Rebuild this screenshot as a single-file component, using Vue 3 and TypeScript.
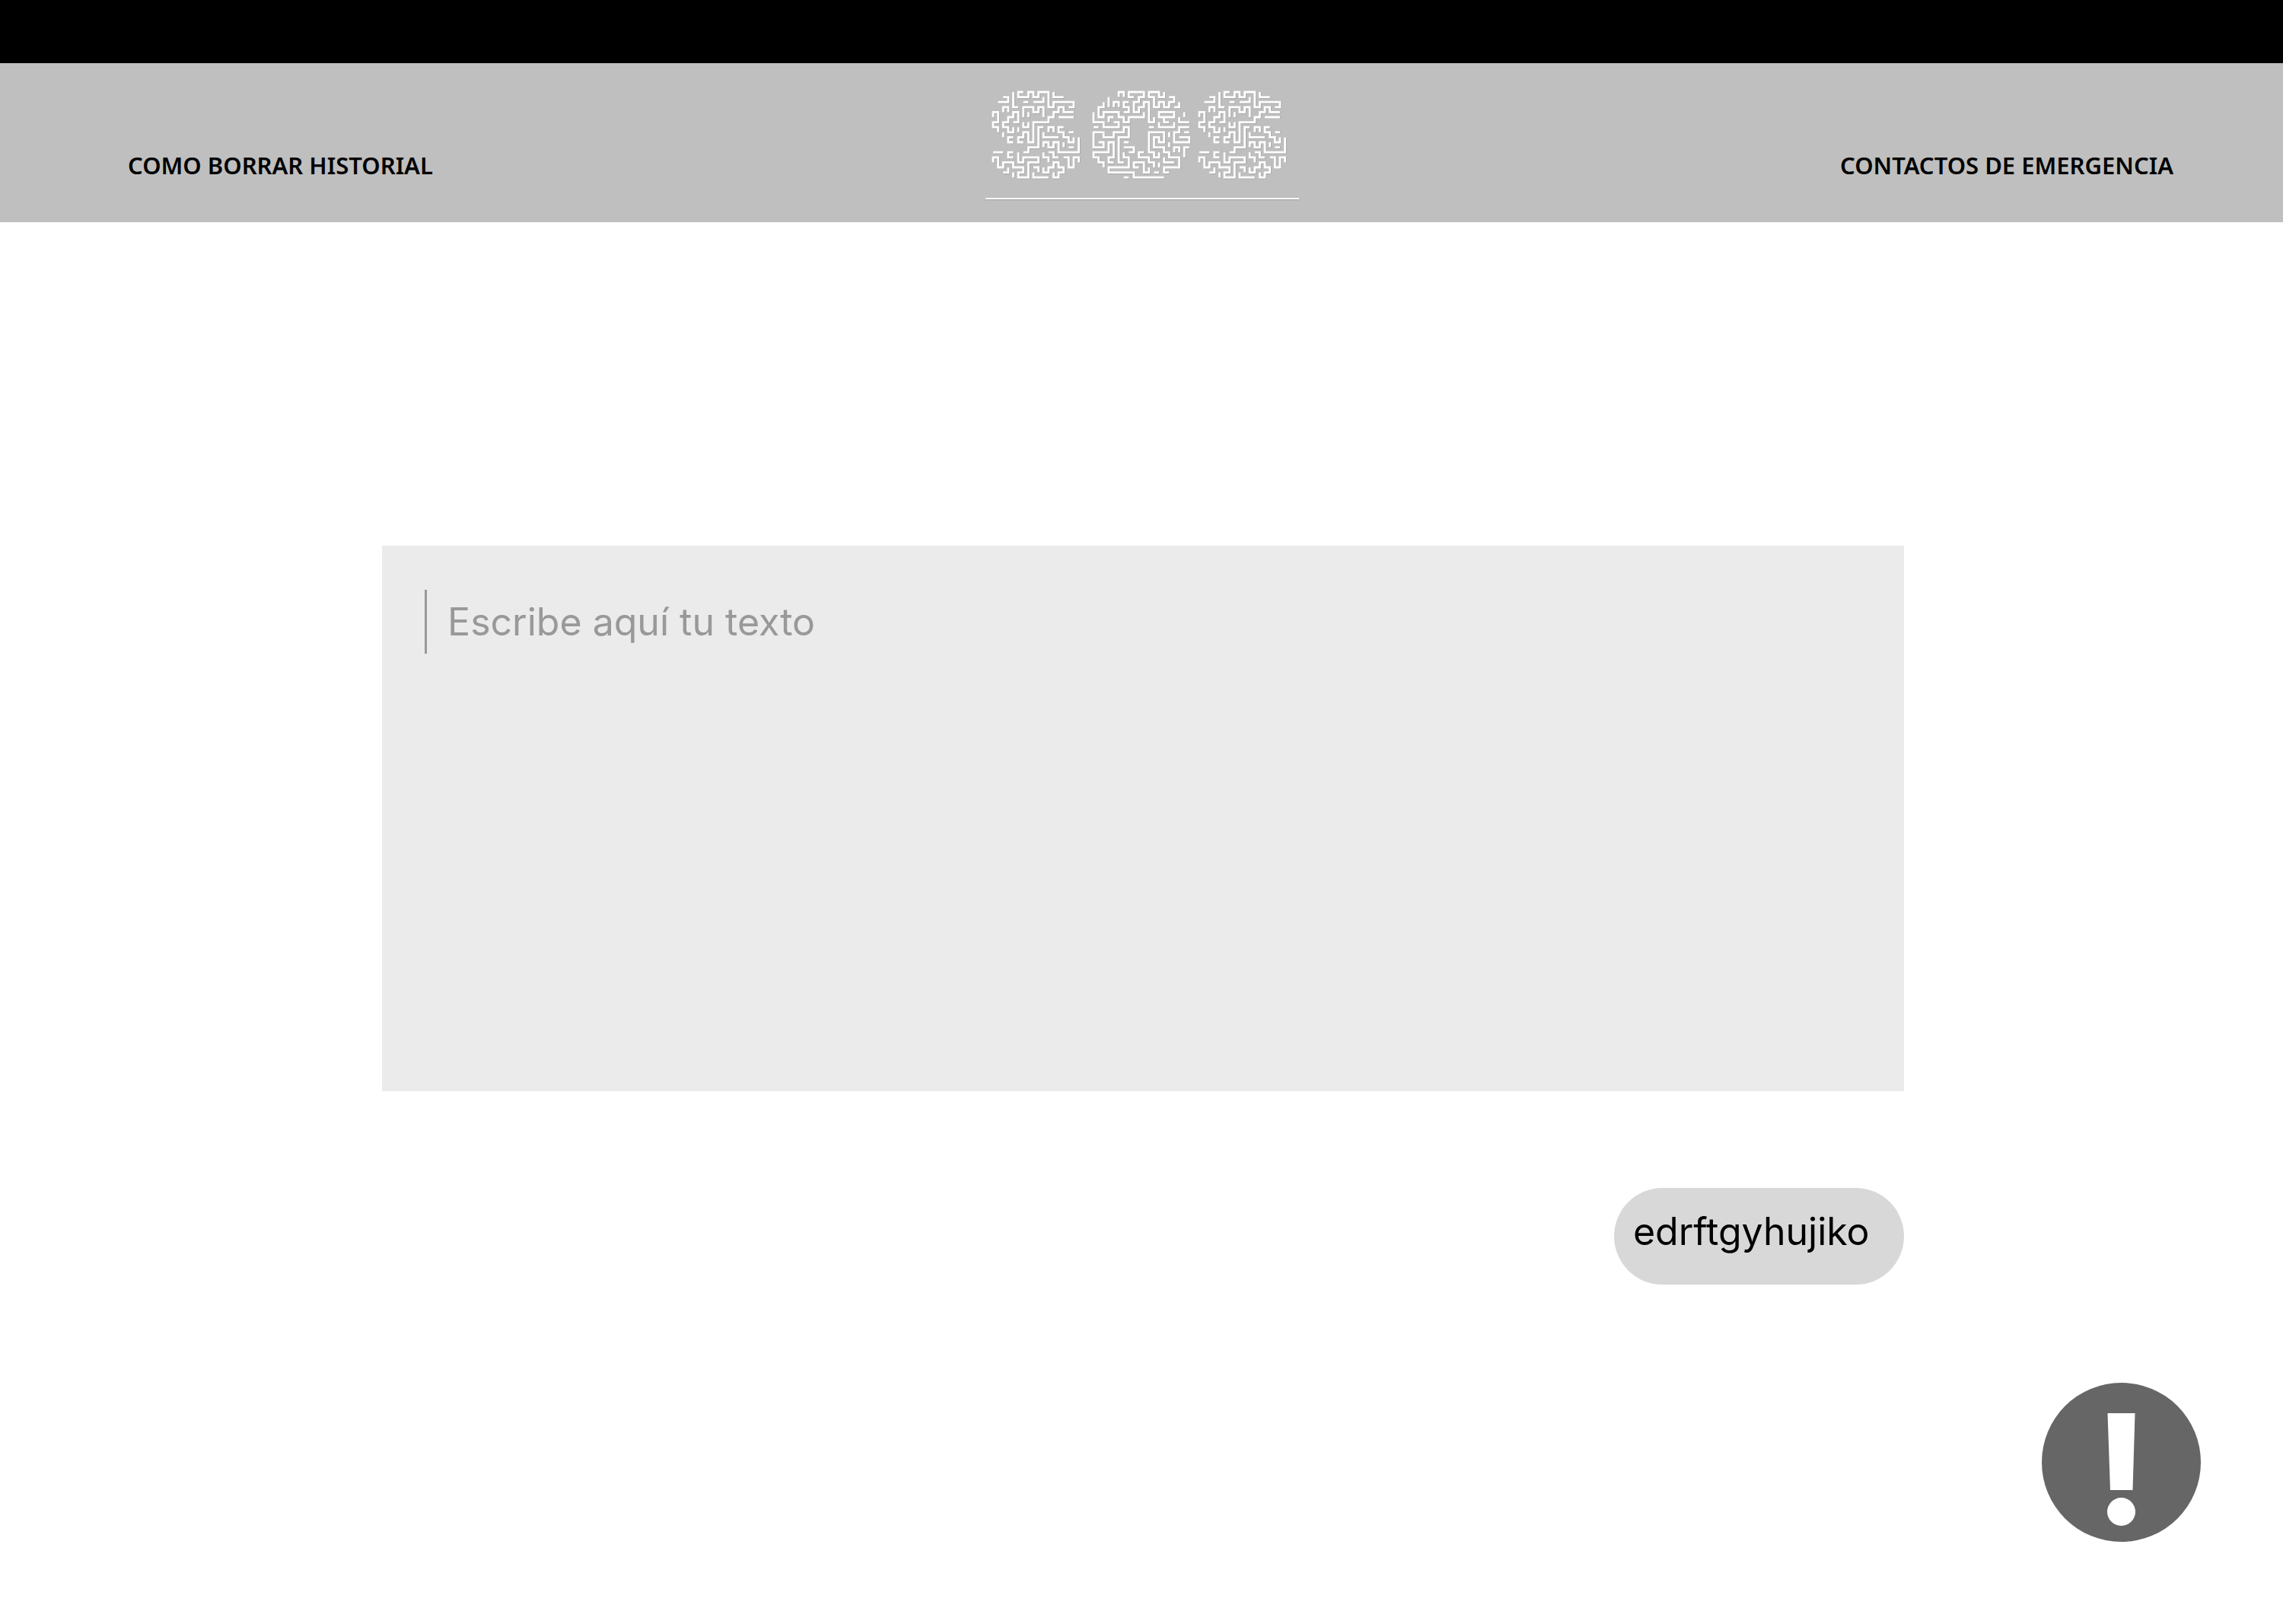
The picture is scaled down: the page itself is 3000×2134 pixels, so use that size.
<script setup lang="ts">
import { ref } from 'vue'

const message = ref('')

// Maze walls on a unit grid: columns run right, rows run down.
const mazeS = [
  'M4 0V3H5', 'M6 0H5V1H7V0H8V1H9V0H11V3H12V2H16V3H15', 'M2 1H3V2H1', 'M12 0V1H14',
  'M6 2H7', 'M8 2H10V1', 'M2 4V3H3V4', 'M6 5V3H8V4H9V3H10V5', 'M7 4V5',
  'M0 5V4H1V6H0V7H1V8', 'M4 6H5V4H4V5H3V6H2V7H3V8H4V7', 'M5 7V8', 'M6 6V7H7V6',
  'M16 4H14V3H13V4H12V5H11V6H8V10H7V8H6V9H5V10H6', 'M13 5H16', 'M2 8V9',
  'M4 9H3V10H4', 'M10 7H9V11H7V12H6', 'M11 8V7H12V8', 'M14 7H13V8H14V9H15V10H16V9',
  'M15 8H16', 'M10 8V9H13', 'M10 11V10H11V11H12V10H13V12H17V9', 'M14 10V11',
  'M15 11H16', 'M0 12H2', 'M4 12H3V13H4',
  'M0 14V13H1V15H2V14H4V15H6V16H5V17H7V14H9V13H6V14H5V12', 'M3 15V16H2', 'M4 16V17',
  'M8 15H9V16', 'M8 16V17H11', 'M10 12V13H11V14', 'M11 12H12V13H13',
  'M10 15V16H11V15H12V14H13V15H14V16H13V17H12V16', 'M14 13H15V15H16V13H17V14',
].join('')

const mazeO = [
  'M5 1V0H6V1', 'M8 1H7V0H10V1H9V2H8V4H9V3H10V2H11V6H12V5',
  'M15 1H16V2H15V3H14V2H13V3H12V1H11V0H13V1H14V0', 'M3 1V3', 'M4 3V2H5V3',
  'M2 2V3H1V5H2V4H5V5H6V6H7V5H10V4', 'M7 2H6V3H7V4H6', 'M17 2V3H16',
  'M0 4V6H2V7H5V6H4', 'M3 6V5H4', 'M0 7H1',
  'M1 10H2V11H0V8H2V9H4V8H6V7H7V9H5V14H6', 'M6 10H7',
  'M4 14H3V13H4V10H3V12H0V13H1V14H2V15', 'M6 11H8V12H7',
  'M6 12V13H7V15H3V16H8V17H14', 'M6 17H7', 'M9 15H8V14H10V16H11V15',
  'M10 12H9V13H11V14H12V15',
  'M13 12V13H12V12H11V8H14V10H13V9H12V11H14V12H15V13H17V15H14V16H15',
  'M12 16H13', 'M13 14V15', 'M14 13V14H16', 'M11 7H12', 'M15 6H14V5H16V4H13V5H14',
  'M13 6V7H16V6', 'M18 4V5', 'M17 5V6H19', 'M19 7H17V8H16V10H19V9H17', 'M18 8H19',
  'M15 8V9', 'M15 10V11', 'M16 12V11H17V12', 'M19 11H18V13',
].join('')

const letters = [
  { x: 10, d: mazeS },
  { x: 142, d: mazeO },
  { x: 281, d: mazeS },
]
</script>

<template>
  <div class="page">
    <div class="strip"></div>
    <header class="header">
      <a class="link left" href="#historial">COMO BORRAR HISTORIAL</a>
      <a class="logo" href="#inicio" aria-label="SOS">
        <svg viewBox="0 0 412 144" width="412" height="144" fill="none">
          <g v-for="(l, i) in letters" :key="i" :transform="`translate(${l.x} 2) scale(6.62 6.6)`">
            <path :d="l.d" stroke="#a0a0a0" stroke-width=".46" transform="translate(.09 .09)" />
            <path :d="l.d" stroke="#fff" stroke-width=".42" />
          </g>
          <path d="M0 143.5H412" stroke="#a0a0a0" />
          <path d="M0 142H412" stroke="#fff" stroke-width="2" />
        </svg>
      </a>
      <a class="link right" href="#contactos">CONTACTOS DE EMERGENCIA</a>
    </header>

    <main class="main">
      <form class="form" @submit.prevent>
        <div class="field">
          <span class="caret"></span>
          <textarea v-model="message" class="input" aria-label="Texto" placeholder="Escribe aquí tu texto"></textarea>
        </div>
        <button class="send" type="submit">edrftgyhujiko</button>
      </form>
    </main>

    <button class="alert" type="button" aria-label="Emergencia">
      <svg viewBox="0 0 209 209" width="209" height="209">
        <circle cx="104.5" cy="104.5" r="104.5" fill="#666" />
        <path d="M86.5 40H122.5L119.5 141H90Z" fill="#fff" />
        <circle cx="104.5" cy="169.5" r="18.5" fill="#fff" />
      </svg>
    </button>
  </div>
</template>

<style>
body {
  background: #fff;
}
</style>

<style scoped>
.page {
  display: flex;
  flex-direction: column;
  min-height: 100vh;
  font-family: Inter, sans-serif;
}

.strip {
  height: 83px;
  background: #000;
}

.header {
  display: grid;
  grid-template-columns: 1fr auto 1fr;
  box-sizing: border-box;
  height: 209px;
  padding: 36px 144px 0 146px;
  background: #bfbfbf;
}

.link {
  margin-top: 76px;
  font: 600 31px/44px 'Noto Sans', sans-serif;
  color: #000;
  text-decoration: none;
  white-space: nowrap;
}

.left {
  padding-left: 22px;
}

.right {
  text-align: right;
}

.logo svg {
  display: block;
}

.main {
  display: flex;
  justify-content: center;
  padding: 425px 0 0 4px;
}

.form {
  display: flex;
  flex-direction: column;
  align-items: flex-end;
  gap: 127px;
  width: 66.75%;
}

.field {
  display: flex;
  gap: 27px;
  box-sizing: border-box;
  width: 100%;
  height: 717px;
  padding: 58px 56px;
  background: #ebebeb;
}

.caret {
  width: 3px;
  height: 84px;
  background: #999;
}

.input {
  flex: 1;
  box-sizing: border-box;
  padding: 10px 0;
  border: 0;
  outline: 0;
  resize: none;
  background: transparent;
  font: 400 50px/64px Inter, sans-serif;
  color: #000;
}

.input::placeholder {
  color: #999;
  opacity: 1;
}

.send {
  width: 381px;
  height: 127px;
  padding: 0 0 14px 25px;
  border: 0;
  border-radius: 64px;
  background: #d8d8d8;
  font: 400 50px/64px Inter, sans-serif;
  color: #000;
  text-align: left;
}

.alert {
  align-self: flex-end;
  margin: auto 108px 108px 0;
  padding: 0;
  border: 0;
  border-radius: 50%;
  background: none;
}

.alert svg {
  display: block;
}
</style>
